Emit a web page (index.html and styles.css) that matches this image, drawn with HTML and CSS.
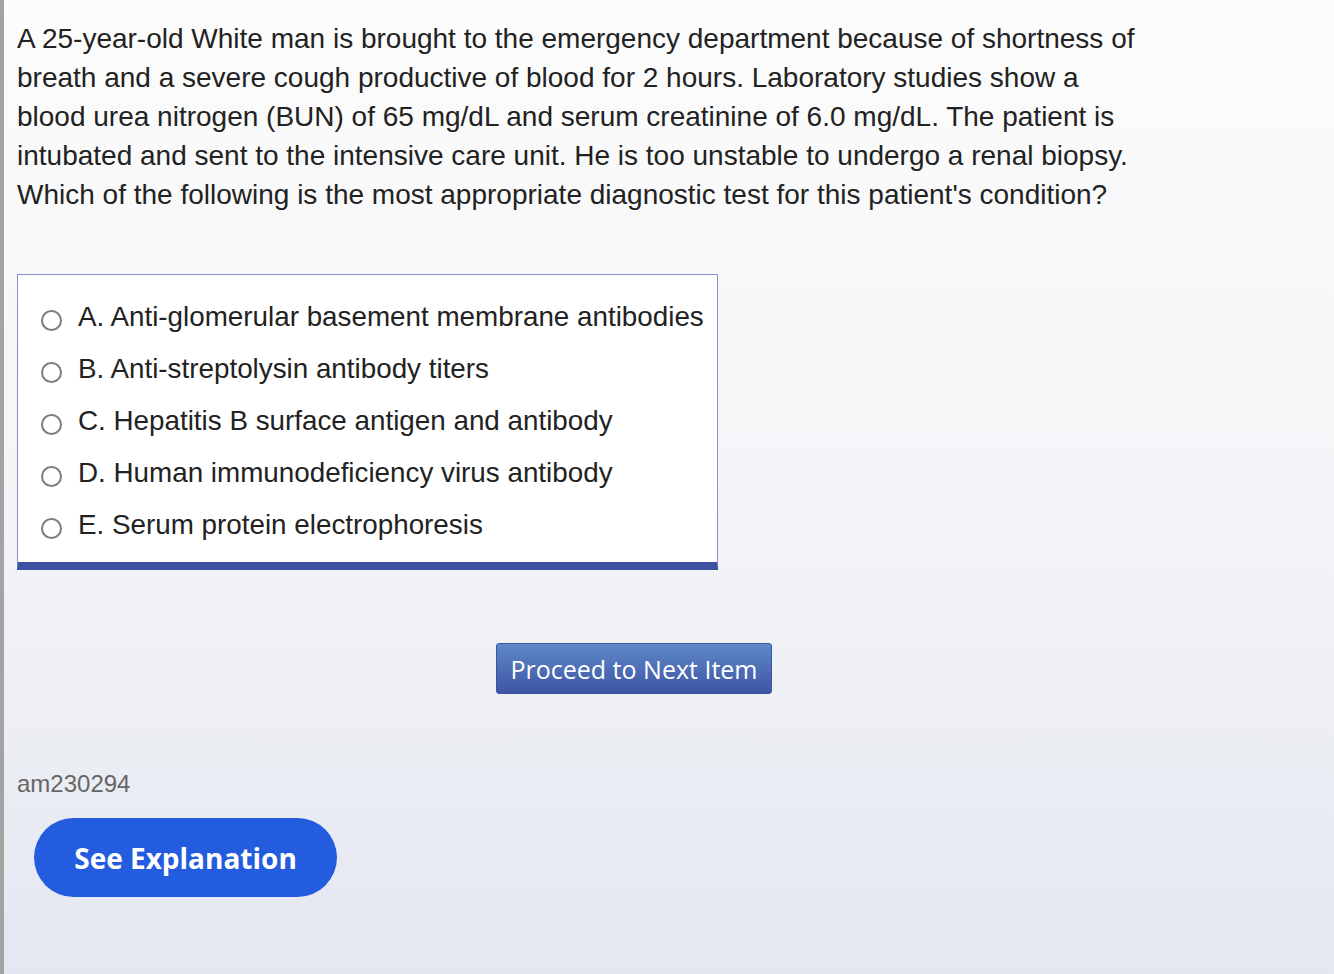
FILE: index.html
```html
<!DOCTYPE html>
<html lang="en">
<head>
<meta charset="utf-8">
<title>Question</title>
<link rel="stylesheet" href="styles.css">
</head>
<body>
<div class="page">
  <div class="content">
    <p class="stem">A 25-year-old White man is brought to the emergency department because of shortness of breath and a severe cough productive of blood for 2 hours. Laboratory studies show a blood urea nitrogen (BUN) of 65 mg/dL and serum creatinine of 6.0 mg/dL. The patient is intubated and sent to the intensive care unit. He is too unstable to undergo a renal biopsy. Which of the following is the most appropriate diagnostic test for this patient's condition?</p>

    <div class="choices">
      <label class="choice"><span class="radio"></span><span class="choice-text">A. Anti-glomerular basement membrane antibodies</span></label>
      <label class="choice"><span class="radio"></span><span class="choice-text">B. Anti-streptolysin antibody titers</span></label>
      <label class="choice"><span class="radio"></span><span class="choice-text">C. Hepatitis B surface antigen and antibody</span></label>
      <label class="choice"><span class="radio"></span><span class="choice-text">D. Human immunodeficiency virus antibody</span></label>
      <label class="choice"><span class="radio"></span><span class="choice-text">E. Serum protein electrophoresis</span></label>
    </div>

    <div class="next-row">
      <button class="next-btn">Proceed to Next Item</button>
    </div>

    <div class="item-id">am230294</div>

    <button class="explain-btn">See Explanation</button>
  </div>
</div>
</body>
</html>
```

FILE: styles.css
```css
html, body {
  margin: 0;
  padding: 0;
  height: 100%;
}

body {
  font-family: "Liberation Sans", Arial, sans-serif;
  color: #222;
  background: linear-gradient(to bottom, #fcfcfc 0%, #f3f4f7 55%, #e4e7f1 100%);
  min-height: 974px;
}

.page {
  border-left: 4px solid #a3a3a3;
  min-height: 974px;
  box-sizing: border-box;
}

.content {
  width: 1260px;
  padding: 19px 0 0 13px;
  box-sizing: border-box;
}

.stem {
  margin: 0;
  width: 1124px;
  font-size: 28px;
  line-height: 39px;
  color: #222;
}

.choices {
  margin-top: 60px;
  width: 701px;
  box-sizing: border-box;
  background: #fff;
  border: 1px solid #8592c8;
  border-bottom: 8px solid #3f51a3;
  padding: 16px 0 11px 23px;
  display: flex;
  flex-direction: column;
}

.choice {
  display: flex;
  align-items: center;
  height: 52px;
  font-size: 27.8px;
  color: #222;
}

.radio {
  width: 17px;
  height: 17px;
  border: 2px solid #7d7d7d;
  border-radius: 50%;
  background: #fff;
  margin-right: 16px;
  margin-top: 6px;
  flex: none;
}

.next-row {
  display: flex;
  justify-content: center;
  margin-top: 73px;
  padding-right: 13px;
}

.next-btn {
  width: 276px;
  height: 51px;
  border: 1px solid #3d54a4;
  border-radius: 3px;
  background: linear-gradient(to bottom, #5d89c7 0%, #3f55a5 100%);
  color: #fff;
  font-family: "Open Sans", sans-serif;
  font-weight: 400;
  font-size: 25px;
  padding: 0;
}

.item-id {
  margin-top: 76px;
  font-size: 24px;
  line-height: 28px;
  color: #666;
}

.explain-btn {
  margin-top: 20px;
  margin-left: 17px;
  width: 303px;
  height: 79px;
  border: none;
  border-radius: 40px;
  background: #245ce0;
  color: #fff;
  font-family: "Open Sans", sans-serif;
  font-weight: 700;
  font-size: 28px;
  padding: 0;
}
```
